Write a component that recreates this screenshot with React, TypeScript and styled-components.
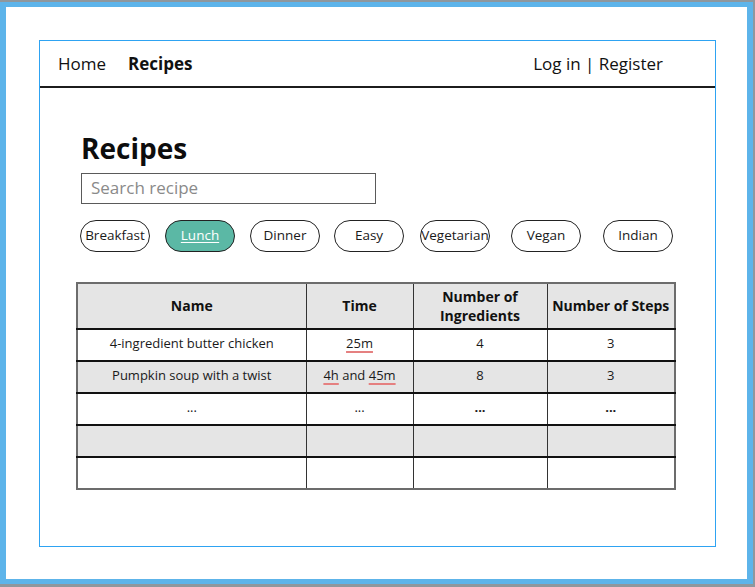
import React from "react"
import styled, { createGlobalStyle } from "styled-components"

const GlobalStyle = createGlobalStyle`
  html, body {
    margin: 0;
    padding: 0;
    background: #fff;
  }
  body {
    font-family: "Open Sans", "Noto Sans", "Liberation Sans", sans-serif;
    color: #111;
  }
  * {
    box-sizing: border-box;
  }
`

const Screen = styled.div`
  width: 755px;
  height: 587px;
  padding: 2px 2px 3px 0;
  background: #8f979d;
`

const Bezel = styled.div`
  width: 100%;
  height: 100%;
  background: #fff;
  border: 5px solid #5db4ea;
  border-left-width: 6px;
  border-right-width: 6px;
  padding: 33px 0 0 33px;
`

const Frame = styled.div`
  width: 677px;
  height: 507px;
  border: 1px solid #2ea3f2;
  display: flex;
  flex-direction: column;
`

const Nav = styled.nav`
  height: 47px;
  flex-shrink: 0;
  display: flex;
  align-items: center;
  padding: 0 52px 0 18px;
  border-bottom: 2px solid #1c1c1c;
`

const NavLink = styled.span<{ $active?: boolean }>`
  font-size: 17px;
  font-weight: ${(p) => (p.$active ? 700 : 400)};
  color: #111;
  margin-right: 22px;
`

const NavRight = styled.span`
  margin-left: auto;
  font-size: 17px;
  color: #111;
`

const Main = styled.main`
  padding: 40px 0 0 36px;
`

const Controls = styled.div`
  padding-left: 5px;
`

const Heading = styled.h1`
  margin: 0;
  font-size: 28px;
  line-height: 40px;
  font-weight: 700;
  color: #0d0d0d;
`

const Search = styled.input`
  display: block;
  margin-top: 5px;
  width: 295px;
  height: 31px;
  border: 1px solid #5a5a5a;
  padding: 0 9px 3px;
  font-family: inherit;
  font-size: 17px;
  color: #222;
  outline: none;
  &::placeholder {
    color: #8a8a8a;
  }
`

const Chips = styled.div`
  display: flex;
  margin-top: 16px;
  margin-left: -1px;
`

const Chip = styled.span<{ $active?: boolean; $ml: number }>`
  width: 70px;
  height: 32px;
  margin-left: ${(p) => p.$ml}px;
  padding-bottom: 2px;
  display: flex;
  align-items: center;
  justify-content: center;
  white-space: nowrap;
  border: 1px solid #222;
  border-radius: 16px;
  font-size: 13.5px;
  background: ${(p) => (p.$active ? "#5bb8a5" : "#fff")};
  color: ${(p) => (p.$active ? "#fff" : "#1a1a1a")};
  text-decoration: ${(p) => (p.$active ? "underline" : "none")};
  text-underline-offset: 2px;
`

const Table = styled.table`
  margin-top: 30px;
  width: 598px;
  table-layout: fixed;
  border-collapse: collapse;
  border: 2px solid #6c6c6c;
`

const Th = styled.th<{ $w: number }>`
  width: ${(p) => p.$w}px;
  height: 46px;
  padding: 0 4px 1px;
  background: #e5e5e5;
  border: 1px solid #333;
  border-top: none;
  font-size: 14px;
  font-weight: 700;
  line-height: 19px;
  color: #111;
`

const Row = styled.tr<{ $shade?: boolean }>`
  height: 32px;
  background: ${(p) => (p.$shade ? "#e5e5e5" : "#fff")};
`

const Td = styled.td<{ $bold?: boolean }>`
  border: 1px solid #333;
  border-top: 2px solid #111;
  text-align: center;
  font-size: 13px;
  font-weight: ${(p) => (p.$bold ? 700 : 400)};
  color: #1a1a1a;
  padding: 0 4px 4px;
`

const Spell = styled.span`
  text-decoration: underline solid #e58080;
  text-decoration-thickness: 1.5px;
  text-underline-offset: 3px;
`

const chips = [
  { label: "Breakfast", ml: 0 },
  { label: "Lunch", ml: 15, active: true },
  { label: "Dinner", ml: 15 },
  { label: "Easy", ml: 14 },
  { label: "Vegetarian", ml: 16 },
  { label: "Vegan", ml: 21 },
  { label: "Indian", ml: 22 },
]

export default function App() {
  return (
    <>
      <GlobalStyle />
      <Screen>
        <Bezel>
          <Frame>
            <Nav>
              <NavLink>Home</NavLink>
              <NavLink $active>Recipes</NavLink>
              <NavRight>Log in | Register</NavRight>
            </Nav>
            <Main>
              <Controls>
                <Heading>Recipes</Heading>
                <Search placeholder="Search recipe" />
                <Chips>
                  {chips.map((c) => (
                    <Chip key={c.label} $ml={c.ml} $active={c.active}>
                      {c.label}
                    </Chip>
                  ))}
                </Chips>
              </Controls>
              <Table>
                <thead>
                  <tr>
                    <Th $w={229}>Name</Th>
                    <Th $w={107}>Time</Th>
                    <Th $w={134}>
                      Number of
                      <br />
                      Ingredients
                    </Th>
                    <Th $w={128}>Number of Steps</Th>
                  </tr>
                </thead>
                <tbody>
                  <Row>
                    <Td>4-ingredient butter chicken</Td>
                    <Td>
                      <Spell>25m</Spell>
                    </Td>
                    <Td>4</Td>
                    <Td>3</Td>
                  </Row>
                  <Row $shade>
                    <Td>Pumpkin soup with a twist</Td>
                    <Td>
                      <Spell>4h</Spell> and <Spell>45m</Spell>
                    </Td>
                    <Td>8</Td>
                    <Td>3</Td>
                  </Row>
                  <Row>
                    <Td>...</Td>
                    <Td>...</Td>
                    <Td $bold>...</Td>
                    <Td $bold>...</Td>
                  </Row>
                  <Row $shade>
                    <Td />
                    <Td />
                    <Td />
                    <Td />
                  </Row>
                  <Row>
                    <Td />
                    <Td />
                    <Td />
                    <Td />
                  </Row>
                </tbody>
              </Table>
            </Main>
          </Frame>
        </Bezel>
      </Screen>
    </>
  )
}
